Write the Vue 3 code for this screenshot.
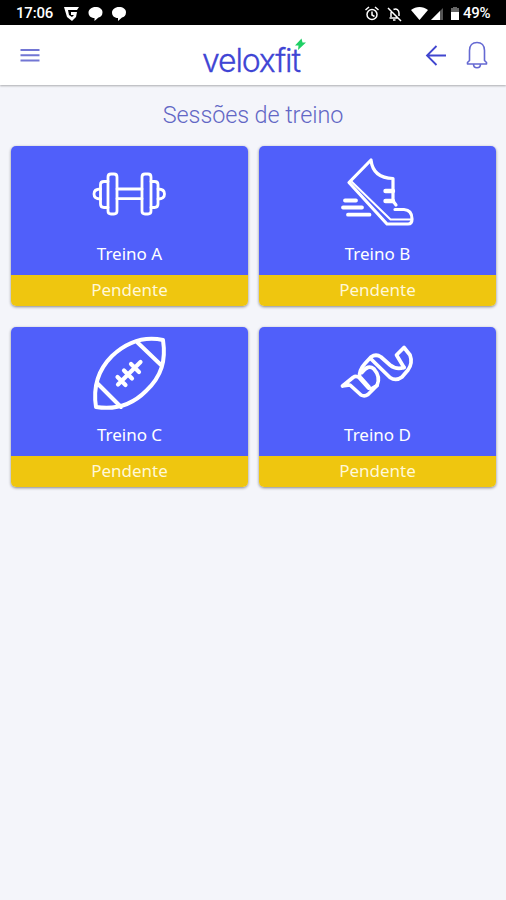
<template>
  <div class="screen">
    <div class="status">
      <span class="clock">17:06</span>
      <svg class="status-left" width="66" height="18" viewBox="0 0 66 18" fill="#fff">
        <path d="M1 2h15l-2 3H5l1 5 3 2 2-2H8V7h6l-1 5-4 4-5-4z" />
        <path d="M32.500 2c4 0 7 2 7 5.200s-2 5-4 5.300l-4 3.500v-3c-4 0-6-2.500-6-5.500s3-5.500 7-5.500z" />
        <path d="M56 2c4 0 7 2 7 5.200s-2 5-4 5.300l-4 3.500v-3c-4 0-6-2.500-6-5.500s3-5.500 7-5.500z" />
      </svg>
      <svg class="status-right" width="98" height="18" viewBox="0 0 98 18" fill="#fff">
        <g fill="none" stroke="#fff" stroke-width="1.500">
          <circle cx="7" cy="9.500" r="5" />
          <path d="M7 6.500v3.500l2.500 1.500M.5 5l3.500-3M13.500 5l-3.500-3" />
          <path d="M23 3l13 13M24.500 13h9M26 12V8l1-2M28.500 4.500c3-1.500 5.500.5 5.500 3.500v3M28 15h2.500" />
        </g>
        <path d="M46 5c5-4 12-4 17 0l-8.500 10z" />
        <path d="M78 3v12H66z" fill="#555" />
        <path d="M75 6v9h-9z" />
        <path d="M86 3h2V2h4v1h2v4h-8z" fill="#666" />
        <path d="M86 7h8v8h-8z" />
      </svg>
      <span class="battery">49%</span>
    </div>

    <header class="topbar">
      <svg class="menu" width="20" height="16" viewBox="0 0 20 16">
        <path d="M.5 3h19M.5 8.300h19M.5 13.600h19" fill="none" stroke="#7276d4" stroke-width="2" />
      </svg>
      <div class="brand">
        <span class="wordmark">veloxfit</span>
        <svg class="bolt" width="13" height="13" viewBox="0 0 13 13">
          <path d="M7.500.5L1 7.500h3.500L4 12l8-7.500H8.500z" fill="#1fd065" />
        </svg>
      </div>
      <svg class="back" width="22" height="22" viewBox="0 0 22 22">
        <path d="M21 11.500H2M11.500 2L2 11.500l9.500 9.500" fill="none" stroke="#4146cf" stroke-width="1.800" />
      </svg>
      <svg class="bell" width="22" height="28" viewBox="0 0 22 28">
        <path
          d="M3.500 19.500V9.500C3.500 4.500 6.500 1.500 11 1.500s7.500 3 7.500 8v10l2 2v1.500h-19v-1.500zM7.500 23c0 5 7 5 7 0"
          fill="none" stroke="#6569d2" stroke-width="1.600" stroke-linejoin="round"
        />
      </svg>
    </header>

    <main>
      <h1>Sessões de treino</h1>
      <div class="grid">
        <div v-for="s in sessions" :key="s.name" class="card">
          <div class="body">
            <svg class="icon" width="100" height="90" viewBox="0 0 100 90">
              <path v-for="(p, i) in s.paths" :key="i" :d="p.d" :stroke-width="p.w" />
            </svg>
            <div class="name">{{ s.name }}</div>
          </div>
          <div class="state">{{ s.state }}</div>
        </div>
      </div>
    </main>
  </div>
</template>

<script setup>
const sessions = [
  {
    name: 'Treino A',
    state: 'Pendente',
    paths: [
      { w: 2.8, d: 'M31 24h3q3 0 3 3v34q0 3-3 3h-3q-3 0-3-3V27q0-3 3-3zM65 24h3q3 0 3 3v34q0 3-3 3h-3q-3 0-3-3V27q0-3 3-3z' },
      { w: 2.8, d: 'M28 31.500h-4q-3.500 0-3.500 3V54q0 3.500 3.500 3.500h4M71 31.500h3.500q3.500 0 3.500 3V54q0 3.500-3.500 3.500H71M37 39h25M37 48.700h25' },
      { w: 2.8, d: 'M20.500 39q-6.500 0-6.500 5t6.500 5M78 39q6.500 0 6.500 5T78 49' },
    ],
  },
  {
    name: 'Treino B',
    state: 'Pendente',
    paths: [
      { w: 3.2, d: 'M43 10L21 32.500L59 74H80Q84 74 84 69Q84 60 76 59.500H67M43 10Q45 28 65 28.500V51L68 55' },
      { w: 2, d: 'M23.500 31.500L62.500 69.500H83' },
      { w: 4.4, d: 'M57.500 41H65M57.500 51H65' },
      { w: 3.8, d: 'M17 50.500H28M15 57.500H34M20 64.700H41.500' },
    ],
  },
  {
    name: 'Treino C',
    state: 'Pendente',
    paths: [
      { w: 4, d: 'M83 9C64 5 47 11 32 25C17 40 13 57 16 76C35 79 52 74 66 60C82 45 86 29 83 9zM57 11L81 34M17 52L41 76' },
      { w: 4.2, d: 'M38 53.500L60.500 31M37.500 46L45.500 54M44 39.500L52 47.500M51 33L59 41' },
    ],
  },
  {
    name: 'Treino D',
    state: 'Pendente',
    paths: [
      // near end of the ribbon
      { w: 3.7, d: 'M14.500 55L25 46.500Q28.500 44 32 47.500L40.500 57M14.500 55L22 54L33 64Q36.500 66 40 63.500L49 54.500' },
      // middle twist
      { w: 3.7, d: 'M31.500 46.500Q31 39 37 32.500L43 26Q48 22.500 53 26L62 34Q68 39 76 36.500' },
      { w: 3.7, d: 'M34 41.500Q40 33 46 38Q53 46 49 54.500L43 58M33 47L41 56' },
      // far end
      { w: 3.7, d: 'M43 28L62 46.500Q68 50.500 74 46L80 39Q85 32 82 24L76 16.500L68.500 24L76 36.500' },
    ],
  },
]
</script>

<style>
body { background: #f4f5fa; }
</style>

<style scoped>
.screen{height:900px;background:#f4f5fa;font-family:"Noto Sans","Open Sans",sans-serif;overflow:hidden}
.status{height:25px;background:#000;color:#fff;display:flex;align-items:center;font:500 15px/25px Roboto,sans-serif;padding:2px 14px 0 16px;box-sizing:border-box}
.clock{width:47px;letter-spacing:-.2px}
.status-left{margin-right:auto}
.battery{letter-spacing:-.3px;width:29px}
.topbar{height:60px;background:#fff;box-shadow:0 1px 2px rgba(0,0,0,.3);display:flex;align-items:center;padding:0 18px 0 20px;position:relative}
.menu{margin-right:auto}
.brand{position:absolute;left:202px;top:10px;width:106px;height:44px;color:#3f45d4}
.wordmark{font:300 32px/52px Inter,sans-serif;letter-spacing:-1.150px;-webkit-text-stroke:.3px #3f45d4}
.bolt{position:absolute;left:92px;top:3px}
.back{margin-right:19px}
h1{margin:0;padding-top:14px;height:47px;box-sizing:content-box;height:47px;text-align:center;font:300 23.400px/32px Roboto,sans-serif;letter-spacing:-.08px;color:#6267c5}
.grid{display:grid;grid-template-columns:237px 237px;column-gap:11px;row-gap:21px;padding-left:11px}
.card{height:160px;border-radius:5px;overflow:hidden;box-shadow:0 1px 3px rgba(0,0,0,.45)}
.body{height:129px;background:#505ffa;display:flex;flex-direction:column;align-items:center;padding-top:4px;box-sizing:border-box}
.icon{fill:none;stroke:#fff;stroke-linecap:round;stroke-linejoin:round;flex:none}
.name{font-size:17px;line-height:28px;color:#fff}
.state{height:31px;background:#efc60f;color:#fff8d8;font-size:17px;line-height:29px;text-align:center}
</style>
